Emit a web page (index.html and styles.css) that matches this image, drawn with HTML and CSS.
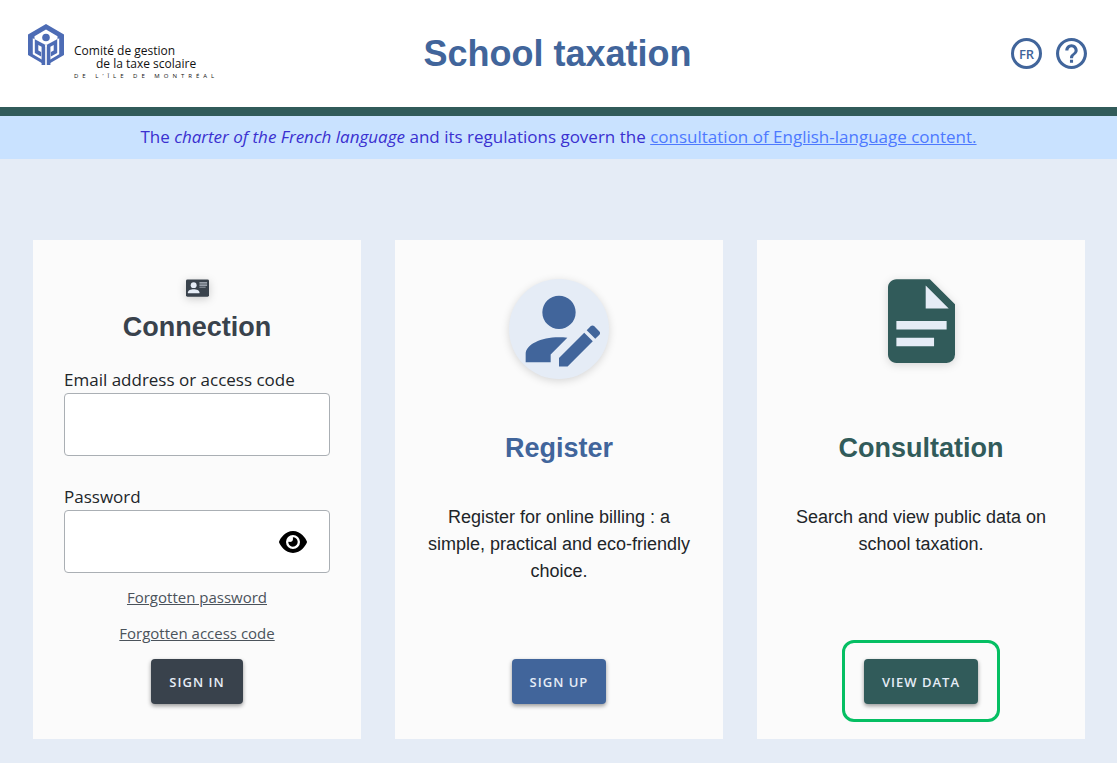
FILE: index.html
```
<!DOCTYPE html>
<html lang="en">
<head>
<meta charset="utf-8">
<meta name="viewport" content="width=device-width, initial-scale=1">
<title>School taxation</title>
<link rel="stylesheet" href="styles.css">
</head>
<body>
<header class="header">
  <a class="logo" href="#">
    <svg class="logo-mark" viewBox="0 0 36 42" aria-hidden="true">
      <path d="M18 0 36 10.500V31L18.900 41V23l8.600-4.200v6.200l-3.500 2v2.500l5.500-2.800V15.500L18 21 6.500 15.500v11.200l5.500 2.800V27l-3.500-2v-6.200L17.100 23v18L0 31V10.500z" fill="#4d6cb5"/>
      <path d="M18 5.500 29.500 12.200v3.300L18 21 6.500 15.500v-3.300zM7 15.500l10.100 5.300V37.500L4.800 30.200V14.200zM29 15.500l-10.100 5.300V37.500l12.300-7.300V14.200z" fill="#fff"/>
      <circle cx="18" cy="13.500" r="3.800" fill="#4d6cb5"/>
      <path d="M6.800 15.300 17.100 20.800V41h-3.500V22.800L10.300 21v5.500l2.800 1.500v4.500l-6.300-3.500zM29.200 15.300 18.900 20.800V41h3.500V22.800l3.300-1.800v5.500l-2.800 1.500v4.500l6.300-3.500z" fill="#4d6cb5"/>
    </svg>
    <span class="logo-text">
      <span>Comité de gestion</span>
      <span class="logo-second">de la taxe scolaire</span>
      <span class="logo-place">DE L’ÎLE DE MONTRÉAL</span>
    </span>
  </a>
  <h1 class="title">School taxation</h1>
  <nav class="actions">
    <a class="lang" href="#">FR</a>
    <a class="help" href="#" aria-label="Help">
      <svg viewBox="2 2 20 20" aria-hidden="true"><path fill="currentColor" d="M11 18h2v-2h-2v2zm1-16C6.480 2 2 6.480 2 12s4.480 10 10 10 10-4.480 10-10S17.520 2 12 2zm0 18c-4.410 0-8-3.590-8-8s3.590-8 8-8 8 3.590 8 8-3.590 8-8 8zm0-14c-2.210 0-4 1.790-4 4h2c0-1.100.9-2 2-2s2 .9 2 2c0 2-3 1.750-3 5h2c0-2.250 3-2.500 3-5 0-2.210-1.790-4-4-4z"/></svg>
    </a>
  </nav>
</header>
<p class="notice">The <em>charter of the French language</em> and its regulations govern the <a href="#">consultation of English-language content.</a></p>
<main class="cards">
  <form class="card connection">
    <svg class="icon-id" viewBox="0 0 24 18" aria-hidden="true">
      <rect width="24" height="18" rx="1.500" fill="#39424c"/>
      <circle cx="8" cy="6" r="3.100" fill="#e5ecf6"/>
      <path d="M2 14.500v-1C2 11.400 5 10.200 8 10.200s6 1.200 6 3.300v1z" fill="#e5ecf6"/>
      <path d="M14 3h8v1.300h-8zM14 5.300h8v1.300h-8zM14 7.600h6.500v1H14z" fill="#b9c0ca"/>
    </svg>
    <h2>Connection</h2>
    <div class="field">
      <label for="email">Email address or access code</label>
      <input id="email" type="text">
    </div>
    <div class="field">
      <label for="password">Password</label>
      <div class="password-box">
        <input id="password" type="password">
        <button class="reveal" type="button" aria-label="Show password">
          <svg viewBox="0 32 576 448" aria-hidden="true"><path d="M288 32c-80.800 0-145.500 36.800-192.600 80.600C48.600 156 17.300 208 2.500 243.700c-3.300 7.900-3.300 16.700 0 24.600C17.300 304 48.600 356 95.400 399.400C142.500 443.200 207.200 480 288 480s145.500-36.800 192.600-80.600c46.800-43.500 78.100-95.400 93-131.100c3.300-7.900 3.300-16.700 0-24.600c-14.900-35.700-46.200-87.700-93-131.100C433.500 68.800 368.800 32 288 32zM144 256a144 144 0 1 1 288 0 144 144 0 1 1 -288 0zm144-64c0 35.300-28.700 64-64 64c-7.100 0-13.900-1.200-20.300-3.300c-5.500-1.800-11.900 1.600-11.700 7.400c.3 6.900 1.300 13.800 3.200 20.700c13.700 51.200 66.400 81.600 117.600 67.900s81.600-66.400 67.900-117.600c-11.100-41.500-47.800-69.400-88.600-71.100c-5.800-.2-9.200 6.100-7.400 11.700c2.100 6.400 3.300 13.200 3.300 20.300z"/></svg>
        </button>
      </div>
    </div>
    <a class="forgot" href="#">Forgotten password</a>
    <a class="forgot" href="#">Forgotten access code</a>
    <button class="button" type="submit">SIGN IN</button>
  </form>
  <section class="card register">
    <div class="picture round">
      <svg viewBox="0 0 24 24" aria-hidden="true"><path fill="currentColor" d="M21.700 13.350 20.700 14.350 18.650 12.300 19.650 11.300C19.860 11.090 20.210 11.090 20.420 11.300L21.700 12.580C21.910 12.790 21.910 13.140 21.700 13.350M12 18.940 18.060 12.880 20.110 14.930 14.060 21H12V18.940M12 14C7.580 14 4 15.790 4 18V20H10V18.110L14 14.110C13.340 14.030 12.670 14 12 14M12 4A4 4 0 0 0 8 8A4 4 0 0 0 12 12A4 4 0 0 0 16 8A4 4 0 0 0 12 4Z"/></svg>
    </div>
    <h2>Register</h2>
    <p>Register for online billing : a simple, practical and eco-friendly choice.</p>
    <button class="button" type="button">SIGN UP</button>
  </section>
  <section class="card consultation">
    <div class="picture">
      <svg class="icon-document" viewBox="4 2 16 20" aria-hidden="true"><path fill="#e5ecf6" d="M5 3h8.500l5.500 5.500V21H5z"/><path fill="currentColor" d="M13 9H18.500L13 3.500V9M6 2H14L20 8V20A2 2 0 0 1 18 22H6C4.890 22 4 21.100 4 20V4C4 2.890 4.890 2 6 2M15 18V16H6V18H15M18 14V12H6V14H18Z"/></svg>
    </div>
    <h2>Consultation</h2>
    <p>Search and view public data on school taxation.</p>
    <button class="button highlighted" type="button">VIEW DATA</button>
  </section>
</main>
</body>
</html>
```
FILE: styles.css
```
* {
  box-sizing: border-box;
}

body {
  margin: 0;
  min-height: 100vh;
  background: #e5ecf6;
  color: #212529;
  font-family: "Segoe UI", "Open Sans", sans-serif;
}

.header {
  display: grid;
  grid-template-columns: 1fr auto 1fr;
  align-items: center;
  padding: 24px 30px 24px 28px;
  border-bottom: 9px solid #315b5a;
  background: #fff;
}

.logo {
  display: flex;
  gap: 10px;
  color: #111;
  text-decoration: none;
}

.logo-mark {
  width: 36px;
  height: 42px;
}

.logo-text {
  display: flex;
  flex-direction: column;
  padding-top: 20px;
  font: 12px/13px "Open Sans", sans-serif;
  white-space: nowrap;
}

.logo-second {
  padding-left: 22px;
}

.logo-place {
  font-size: 6px;
  letter-spacing: 4px;
}

.title {
  margin: 0;
  color: #41659b;
  font: bold 36px/42px "Liberation Sans", Arial, sans-serif;
}

.actions {
  display: flex;
  justify-content: flex-end;
  gap: 14px;
}

.lang,
.help {
  width: 31px;
  height: 31px;
  color: #41659b;
}

.lang {
  display: grid;
  place-items: center;
  border: 3px solid;
  border-radius: 50%;
  font-size: 13px;
  font-weight: 600;
  text-decoration: none;
}

.help svg {
  display: block;
}

.notice {
  margin: 0;
  padding: 9px 16px 10px;
  background: #c9e2ff;
  color: #3a30d0;
  font-size: 17px;
  line-height: 24px;
  text-align: center;
}

.notice a {
  color: #4d79ff;
}

.cards {
  display: grid;
  grid-template-columns: repeat(3, 1fr);
  gap: 34px;
  padding: 81px 32px 24px 33px;
}

.card {
  display: flex;
  flex-direction: column;
  align-items: center;
  padding: 39px 31px 35px;
  background: #fbfbfb;
}

.connection {
  --accent: #39424c;
}

.register {
  --accent: #41659b;
}

.consultation {
  --accent: #315b5a;
}

.card h2 {
  margin: 53px 0 0;
  color: var(--accent);
  font: bold 27px/32px "Liberation Sans", Arial, sans-serif;
}

.connection h2 {
  margin-top: 14px;
}

.card p {
  margin: 40px 0;
  font: 18px/27px "Liberation Sans", Arial, sans-serif;
  text-align: center;
}

.icon-id {
  width: 23px;
  height: 18px;
  filter: drop-shadow(0 2px 4px rgba(0, 0, 0, 0.2));
}

.picture {
  width: 100px;
  height: 100px;
  color: var(--accent);
}

.picture svg {
  display: block;
  margin: 0 auto;
}

.round {
  border-radius: 50%;
  background: #e5ecf6;
  box-shadow: 0 2px 8px rgba(0, 0, 0, 0.15);
}

.icon-document {
  width: 67px;
  height: 84px;
  filter: drop-shadow(0 2px 4px rgba(0, 0, 0, 0.15));
}

.field {
  align-self: stretch;
  margin-top: 25px;
}

.field + .field {
  margin-top: 29px;
}

.field label {
  display: block;
  margin-bottom: 1px;
  font-size: 17px;
  line-height: 24px;
}

.field input {
  display: block;
  width: 100%;
  height: 63px;
  padding: 0 16px;
  border: 1px solid #aaafb4;
  border-radius: 4px;
  background: #fff;
  font: inherit;
}

.password-box {
  position: relative;
}

.reveal {
  position: absolute;
  top: 0;
  right: 23px;
  display: grid;
  place-items: center;
  height: 100%;
  padding: 0;
  border: 0;
  background: none;
}

.reveal svg {
  width: 28px;
  height: 22px;
}

.forgot {
  margin-top: 12px;
  color: #4b535b;
  font-size: 15px;
  line-height: 24px;
}

.button {
  position: relative;
  height: 45px;
  margin-top: auto;
  padding: 0 18px;
  border: 0;
  border-radius: 4px;
  background: var(--accent);
  box-shadow: 0 2px 4px rgba(0, 0, 0, 0.4);
  color: #e5ecf6;
  font: 600 13px/24px "Open Sans", sans-serif;
  letter-spacing: 1px;
}

.forgot + .button {
  margin-top: 14px;
}

.highlighted::after {
  content: "";
  position: absolute;
  inset: -19px -22px -18px;
  border: 3px solid #05bf63;
  border-radius: 12px;
}
```
